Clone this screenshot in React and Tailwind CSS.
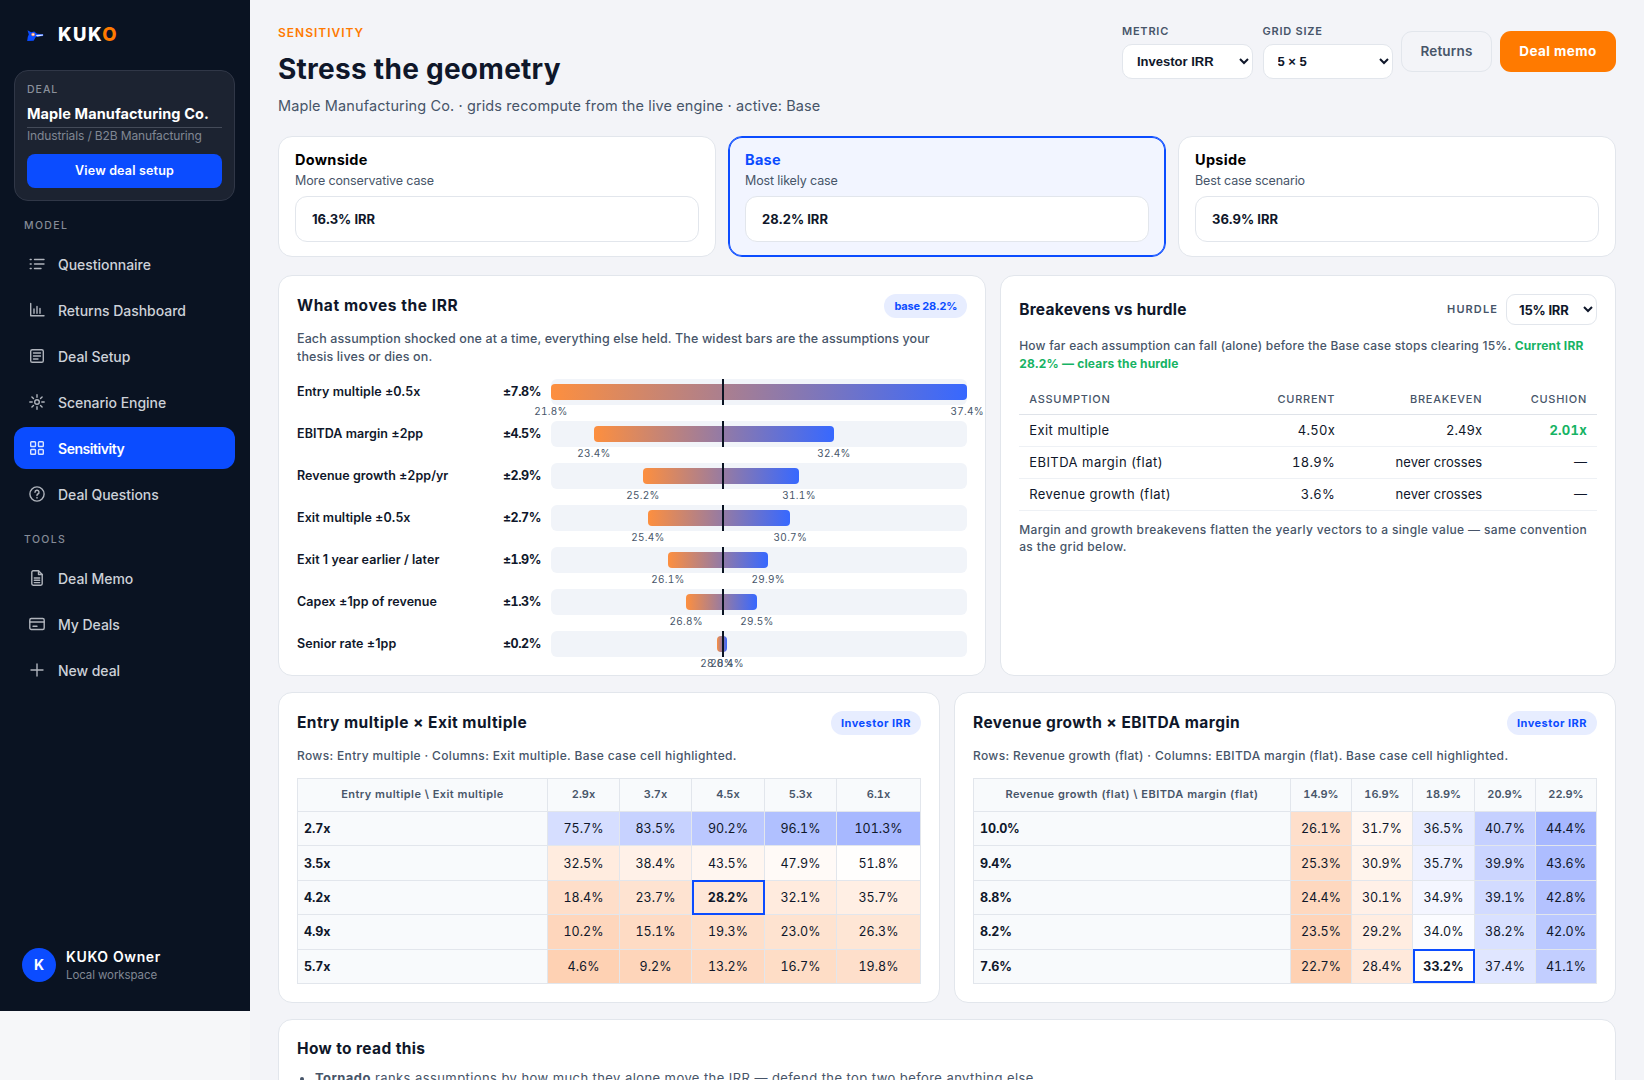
import React, { useState } from 'react';

const icons = {
  list: (
    <>
      <path d="M5.5 3.5h9.5M5.5 8h9.5M5.5 12.5H12" />
      <path d="M1.2 3.5h1M1.2 8h1M1.2 12.5h1" />
    </>
  ),
  chart: <path d="M1.7 1.5v12.3H15M5 11.3V7M8 11.3V4.5M11 11.3V6.5" />,
  form: (
    <>
      <rect x="1.7" y="1.7" width="12.6" height="12.6" rx="1.6" />
      <path d="M4.5 5h7M4.5 8h7M4.5 11h4.5" />
    </>
  ),
  sun: (
    <>
      <circle cx="8" cy="8" r="2.3" />
      <path d="M8 .8v2.4M8 12.8v2.4M.8 8h2.4M12.8 8h2.4M2.9 2.9l1.6 1.6M11.5 11.5l1.6 1.6M13.1 2.9l-1.6 1.6M4.5 11.5l-1.6 1.6" />
    </>
  ),
  grid: (
    <>
      <rect x="1.7" y="1.7" width="4.8" height="4.8" rx=".8" />
      <rect x="9.5" y="1.7" width="4.8" height="4.8" rx=".8" />
      <rect x="1.7" y="9.5" width="4.8" height="4.8" rx=".8" />
      <rect x="9.5" y="9.5" width="4.8" height="4.8" rx=".8" />
    </>
  ),
  help: (
    <>
      <circle cx="8" cy="8" r="7.1" />
      <path d="M6 6.2a2 2 0 1 1 2.9 1.8c-.6.3-.9.7-.9 1.4M8 11.5v.5" />
    </>
  ),
  file: (
    <>
      <path d="M9.5.8H4.2c-.8 0-1.4.6-1.4 1.4v11.6c0 .8.6 1.4 1.4 1.4h7.6c.8 0 1.4-.6 1.4-1.4V4.5z" />
      <path d="M9.5.8v3.7h3.7M5.3 8h5.4M5.3 10.3h5.4M5.3 12.6h5.4" />
    </>
  ),
  card: (
    <>
      <rect x=".8" y="2.5" width="14.4" height="11" rx="1.5" />
      <path d="M.8 6h14.4M4 10.2h4" />
    </>
  ),
  plus: <path d="M8 2v12M2 8h12" />,
};

const modelNav = [
  { label: 'Questionnaire', icon: 'list' },
  { label: 'Returns Dashboard', icon: 'chart' },
  { label: 'Deal Setup', icon: 'form' },
  { label: 'Scenario Engine', icon: 'sun' },
  { label: 'Sensitivity', icon: 'grid', active: true },
  { label: 'Deal Questions', icon: 'help' },
];

const toolsNav = [
  { label: 'Deal Memo', icon: 'file' },
  { label: 'My Deals', icon: 'card' },
  { label: 'New deal', icon: 'plus' },
];

const scenarios = [
  { name: 'Downside', note: 'More conservative case', irr: '16.3% IRR' },
  { name: 'Base', note: 'Most likely case', irr: '28.2% IRR' },
  { name: 'Upside', note: 'Best case scenario', irr: '36.9% IRR' },
];

// from / to are positions along the track, in percent
const tornado = [
  { label: 'Entry multiple ±0.5x', swing: '±7.8%', low: '21.8%', high: '37.4%', from: 0, to: 100 },
  { label: 'EBITDA margin ±2pp', swing: '±4.5%', low: '23.4%', high: '32.4%', from: 10.3, to: 68 },
  { label: 'Revenue growth ±2pp/yr', swing: '±2.9%', low: '25.2%', high: '31.1%', from: 22.1, to: 59.6 },
  { label: 'Exit multiple ±0.5x', swing: '±2.7%', low: '25.4%', high: '30.7%', from: 23.3, to: 57.5 },
  { label: 'Exit 1 year earlier / later', swing: '±1.9%', low: '26.1%', high: '29.9%', from: 28.1, to: 52.2 },
  { label: 'Capex ±1pp of revenue', swing: '±1.3%', low: '26.8%', high: '29.5%', from: 32.5, to: 49.5 },
  { label: 'Senior rate ±1pp', swing: '±0.2%', low: '28.0%', high: '28.4%', from: 39.9, to: 42.3 },
];
const basePos = 41.3;

const breakevens = [
  ['Exit multiple', '4.50x', '2.49x', '2.01x'],
  ['EBITDA margin (flat)', '18.9%', 'never crosses', '—'],
  ['Revenue growth (flat)', '3.6%', 'never crosses', '—'],
];

const multipleGrid = {
  corner: 'Entry multiple \\ Exit multiple',
  cols: ['2.9x', '3.7x', '4.5x', '5.3x', '6.1x'],
  widths: [250, 72, 72, 73, 72, 84],
  base: [2, 2],
  rows: [
    ['2.7x', 75.7, 83.5, 90.2, 96.1, 101.3],
    ['3.5x', 32.5, 38.4, 43.5, 47.9, 51.8],
    ['4.2x', 18.4, 23.7, 28.2, 32.1, 35.7],
    ['4.9x', 10.2, 15.1, 19.3, 23.0, 26.3],
    ['5.7x', 4.6, 9.2, 13.2, 16.7, 19.8],
  ],
};

const growthGrid = {
  corner: 'Revenue growth (flat) \\ EBITDA margin (flat)',
  cols: ['14.9%', '16.9%', '18.9%', '20.9%', '22.9%'],
  widths: [317, 61, 61, 62, 61, 61],
  base: [4, 2],
  rows: [
    ['10.0%', 26.1, 31.7, 36.5, 40.7, 44.4],
    ['9.4%', 25.3, 30.9, 35.7, 39.9, 43.6],
    ['8.8%', 24.4, 30.1, 34.9, 39.1, 42.8],
    ['8.2%', 23.5, 29.2, 34.0, 38.2, 42.0],
    ['7.6%', 22.7, 28.4, 33.2, 37.4, 41.1],
  ],
};

const LOW = [254, 209, 179];
const HIGH = [167, 184, 255];

function heat(value, min, max) {
  const mid = (min + max) / 2;
  const t = (value - mid) / (max - mid);
  const end = t < 0 ? LOW : HIGH;
  return `rgb(${end.map((c) => Math.round(255 + (c - 255) * Math.abs(t))).join(',')})`;
}

function Icon({ name }) {
  return (
    <svg className="w-4 h-4 shrink-0 opacity-85" viewBox="0 0 16 16" fill="none" stroke="currentColor" strokeWidth="1.4" strokeLinecap="round" strokeLinejoin="round">
      {icons[name]}
    </svg>
  );
}

function NavItem({ item }) {
  return (
    <a
      className={`flex items-center gap-[13px] h-[42px] px-[15px] rounded-[12px] text-[14px] ${
        item.active ? 'bg-[#0b4cff] text-white font-semibold tracking-[-0.033em]' : 'text-[#cdd1d8] font-medium tracking-[-0.003em]'
      }`}
    >
      <Icon name={item.icon} />
      {item.label}
    </a>
  );
}

function Sidebar() {
  return (
    <aside className="w-[250px] h-[1011px] shrink-0 bg-[#0a1322] pl-3.5 pr-[15px] pt-3.5 pb-[27px] flex flex-col">
      <div className="h-[41px] flex items-center pl-3">
        <svg className="w-[18px] h-[14px]" viewBox="0 0 18 14">
          <path d="M1.5 2.3l3.8 2L8.2 3.4l2.8 2.4 6.2.4v1.7l-5.6.9-1.8.2L7.6 12.7 1.2 13l.6-4.2 1-2.2z" fill="#0b4cff" />
          <path d="M9.6 7.1l7.4-.7v1.1l-5.6.9z" fill="#e6ecff" />
          <circle cx="7.1" cy="6.5" r="1.8" fill="#ff9a6a" />
          <circle cx="7.1" cy="6.5" r=".8" fill="#fff" />
        </svg>
        <span className="ml-[14px] text-[18.5px] font-extrabold tracking-[0.078em] text-white">
          KUK<span className="text-[#ff7a00]">O</span>
        </span>
      </div>

      <div className="mt-[15px] h-[131px] rounded-[14px] border border-[#303747] bg-[#1c2331] p-3">
        <div className="text-[10.5px] leading-[14px] font-medium tracking-[0.095em] text-[#8a909b]">DEAL</div>
        <div className="mt-1.5 pb-[1.5px] border-b border-[#444b59] text-[14.5px] leading-[22px] font-bold tracking-[0.006em] text-white whitespace-nowrap">Maple Manufacturing Co.</div>
        <div className="text-[12px] leading-[15px] tracking-[-0.011em] text-[#808793] whitespace-nowrap">Industrials / B2B Manufacturing</div>
        <button className="mt-[11.5px] w-full h-[34px] rounded-[8px] bg-[#0b4cff] text-[12.5px] font-semibold tracking-[0.014em] text-white">View deal setup</button>
      </div>

      <div className="mt-[18px] pl-2.5 text-[10.5px] leading-[14px] font-medium tracking-[0.13em] text-[#858b97]">MODEL</div>
      <nav className="mt-[10px] flex flex-col gap-1">
        {modelNav.map((item) => <NavItem key={item.label} item={item} />)}
      </nav>
      <div className="mt-[18px] pl-2.5 text-[10.5px] leading-[14px] font-medium tracking-[0.13em] text-[#858b97]">TOOLS</div>
      <nav className="mt-[10px] flex flex-col gap-1">
        {toolsNav.map((item) => <NavItem key={item.label} item={item} />)}
      </nav>

      <div className="mt-auto pl-2 flex items-center gap-2.5">
        <div className="w-[34px] h-[34px] rounded-full bg-[#0b4cff] text-white text-[14px] font-bold flex items-center justify-center">K</div>
        <div className="pt-[3px]">
          <div className="text-[14px] leading-[18px] font-semibold tracking-[0.045em] text-white">KUKO Owner</div>
          <div className="text-[11.5px] leading-[18px] tracking-[-0.008em] text-[#808793]">Local workspace</div>
        </div>
      </div>
    </aside>
  );
}

function Field({ label, children }) {
  return (
    <label className="flex flex-col">
      <span className="text-[11px] leading-[14px] font-semibold tracking-[0.07em] text-[#475569] mb-1.5">{label}</span>
      <select className="w-[130.5px] h-[35px] pl-[10px] pr-1 rounded-[10px] border border-[#e2e6ec] bg-white font-['Liberation_Sans',sans-serif] text-[13px] font-bold text-[#0f172a]">
        {children}
      </select>
    </label>
  );
}

function Header() {
  return (
    <header className="flex justify-between items-start h-[112px]">
      <div>
        <div className="text-[12px] leading-[17px] font-semibold tracking-[0.082em] text-[#ff7a00]">SENSITIVITY</div>
        <h1 className="mt-[10px] text-[28px] leading-[36px] font-bold tracking-[0.0095em] text-[#0f172a]">Stress the geometry</h1>
        <p className="mt-2 text-[14.5px] leading-[22px] tracking-[0.0078em] text-[#475569]">Maple Manufacturing Co. · grids recompute from the live engine · active: Base</p>
      </div>
      <div className="flex items-start">
        <div className="flex gap-2.5">
          <Field label="METRIC"><option>Investor IRR</option></Field>
          <Field label="GRID SIZE"><option>5 × 5</option></Field>
        </div>
        <button className="mt-[7px] ml-2 w-[91px] h-[41px] rounded-[11px] border border-[#e2e6ec] text-[13.5px] font-semibold tracking-[0.015em] text-[#475569]">Returns</button>
        <button className="mt-[7px] ml-2 w-[116px] h-[41px] rounded-[11px] bg-[#ff7a00] text-[13.5px] font-bold tracking-[0.031em] text-white">Deal memo</button>
      </div>
    </header>
  );
}

function ScenarioCard({ scenario, active, onClick }) {
  return (
    <button
      onClick={onClick}
      className={`h-[121px] rounded-[14px] px-4 pt-[14px] border text-left flex flex-col ${
        active ? 'border-[#0b4cff] bg-[#f2f5ff] ring-1 ring-inset ring-[#0b4cff]' : 'border-[#e2e6ec] bg-white'
      }`}
    >
      <span className={`text-[14.5px] leading-[18px] font-bold tracking-[0.02em] ${active ? 'text-[#0b4cff]' : 'text-black'}`}>{scenario.name}</span>
      <span className="mt-[3px] text-[12.5px] leading-[18px] tracking-[-0.01em] text-[#475569]">{scenario.note}</span>
      <span className="mt-[6px] w-full h-[46px] shrink-0 px-4 pt-0.5 flex items-center rounded-[12px] border border-[#e2e6ec] bg-white text-[13px] font-bold text-[#0f172a]">{scenario.irr}</span>
    </button>
  );
}

function Badge({ children }) {
  return <span className="h-6 px-2.5 flex items-center rounded-full bg-[#e7edff] text-[11px] font-bold text-[#0b4cff]">{children}</span>;
}

function Tornado() {
  return (
    <section className="h-[401px] bg-white border border-[#e2e6ec] rounded-[14px] p-[18px]">
      <div className="flex items-center justify-between">
        <h2 className="text-[15.5px] leading-[24px] font-bold tracking-[0.0365em] text-[#0f172a]">What moves the IRR</h2>
        <Badge><span className="tracking-[-0.015em]">base 28.2%</span></Badge>
      </div>
      <p className="mt-3 text-[12.5px] leading-[18px] font-medium tracking-[0.009em] text-[#475569]">
        Each assumption shocked one at a time, everything else held. The widest bars are the assumptions your thesis lives or dies on.
      </p>
      <div className="mt-[13px] flex flex-col gap-4">
        {tornado.map((row) => (
          <div key={row.label} className="grid grid-cols-[190px_64px_1fr] items-center h-[26px]">
            <span className="text-[12.5px] font-semibold tracking-[0.005em] text-[#0f172a]">{row.label}</span>
            <span className="pr-2.5 text-right text-[12.5px] font-bold tracking-[-0.035em] tabular-nums text-[#0f172a]">{row.swing}</span>
            <div className="relative h-[26px] rounded-[6px] bg-[#f1f4f9]">
              <div
                className="absolute top-[5px] h-4 rounded-[4px] bg-linear-to-r/srgb from-[#fd8f3f] to-[#3768ff]"
                style={{ left: `${row.from}%`, width: `${row.to - row.from}%` }}
              />
              <div className="absolute top-0 h-full w-0.5 -translate-x-1/2 bg-[#0a1322]" style={{ left: `${basePos}%` }} />
              <span className="absolute top-[26px] -translate-x-1/2 text-[10px] leading-[13px] tracking-[0.03em] tabular-nums text-[#475569]" style={{ left: `${row.from}%` }}>{row.low}</span>
              <span className="absolute top-[26px] -translate-x-1/2 text-[10px] leading-[13px] tracking-[0.03em] tabular-nums text-[#475569]" style={{ left: `${row.to}%` }}>{row.high}</span>
            </div>
          </div>
        ))}
      </div>
    </section>
  );
}

function Breakevens() {
  return (
    <section className="h-[401px] bg-white border border-[#e2e6ec] rounded-[14px] p-[18px]">
      <div className="flex items-center justify-between">
        <h2 className="text-[15.5px] leading-[24px] font-bold tracking-[0.016em] text-[#0f172a]">Breakevens vs hurdle</h2>
        <label className="flex items-center gap-2 text-[11px] font-semibold tracking-[0.1em] text-[#475569]">
          HURDLE
          <select className="w-[91px] h-[31px] pl-2 pr-0.5 rounded-[9px] border border-[#e2e6ec] bg-white text-[13px] font-bold tracking-[-0.015em] text-[#0f172a]">
            <option>15% IRR</option>
          </select>
        </label>
      </div>
      <p className="mt-3 text-[12px] leading-[18px] font-medium tracking-[0.019em] text-[#475569]">
        How far each assumption can fall (alone) before the Base case stops clearing 15%.{' '}
        <span className="font-bold tracking-[0.015em] text-[#16b364]">Current IRR 28.2% — clears the hurdle</span>
      </p>
      <table className="mt-[10px] w-full table-fixed border-collapse text-[13px] text-[#0f172a]">
        <colgroup>
          <col className="w-[192px]" />
          <col className="w-[134px]" />
          <col className="w-[147px]" />
          <col />
        </colgroup>
        <thead>
          <tr className="h-[31px] border-b border-[#dfe3e9] text-[11px] tracking-[0.065em] text-[#475569]">
            <th className="px-2.5 pt-0.5 text-left font-medium">ASSUMPTION</th>
            <th className="px-2.5 pt-0.5 text-right font-medium">CURRENT</th>
            <th className="px-2.5 pt-0.5 text-right font-medium">BREAKEVEN</th>
            <th className="px-2.5 pt-0.5 text-right font-medium">CUSHION</th>
          </tr>
        </thead>
        <tbody>
          {breakevens.map(([name, current, breakeven, cushion]) => (
            <tr key={name} className="h-[32px] border-b border-[#eef1f5]">
              <td className="px-2.5 pt-0.5 tracking-[0.035em]">{name}</td>
              <td className="px-2.5 pt-0.5 text-right tracking-[0.025em] tabular-nums">{current}</td>
              <td className="px-2.5 pt-0.5 text-right tracking-[0.003em] tabular-nums">{breakeven}</td>
              <td className={`px-2.5 pt-0.5 text-right tabular-nums ${cushion === '—' ? '' : 'font-bold tracking-[0.02em] text-[#16b364]'}`}>{cushion}</td>
            </tr>
          ))}
        </tbody>
      </table>
      <p className="mt-[10px] text-[12px] leading-[17px] font-medium tracking-[0.0295em] text-[#475569]">
        Margin and growth breakevens flatten the yearly vectors to a single value — same convention as the grid below.
      </p>
    </section>
  );
}

function HeatGrid({ title, note, grid }) {
  const values = grid.rows.flatMap((row) => row.slice(1));
  const min = Math.min(...values);
  const max = Math.max(...values);
  return (
    <section className="h-[311px] bg-white border border-[#e2e6ec] rounded-[14px] p-[18px]">
      <div className="flex items-center justify-between">
        <h2 className="text-[15.5px] leading-[24px] font-bold tracking-[0.029em] text-[#0f172a]">{title}</h2>
        <Badge><span className="tracking-[0.045em]">Investor IRR</span></Badge>
      </div>
      <p className="mt-3 text-[12px] leading-[18px] font-medium tracking-[0.029em] text-[#475569]">{note}</p>
      <table className="mt-[13px] w-full table-fixed border-collapse text-[12.5px] tabular-nums text-[#0f172a]">
        <colgroup>
          {grid.widths.map((w, i) => <col key={i} style={{ width: w }} />)}
        </colgroup>
        <thead>
          <tr className="h-[33px] bg-[#f8fafc] text-[11px] text-[#475569]">
            <th className="border border-[#e2e6ec] pb-0.5 font-semibold tracking-[0.04em]">{grid.corner}</th>
            {grid.cols.map((c) => <th key={c} className="border border-[#e2e6ec] pb-0.5 font-semibold">{c}</th>)}
          </tr>
        </thead>
        <tbody>
          {grid.rows.map(([head, ...cells], r) => (
            <tr key={head} className="h-[34.4px]">
              <th className="border border-[#e2e6ec] bg-[#f8fafc] pl-[6px] pt-0.5 text-left font-bold tracking-[-0.01em]">{head}</th>
              {cells.map((v, c) => {
                const isBase = r === grid.base[0] && c === grid.base[1];
                return (
                  <td
                    key={c}
                    className={`border border-[#e2e6ec] pt-0.5 text-center ${isBase ? 'font-bold outline-2 -outline-offset-2 outline-[#0b4cff]' : ''}`}
                    style={{ backgroundColor: heat(v, min, max) }}
                  >
                    {v.toFixed(1)}%
                  </td>
                );
              })}
            </tr>
          ))}
        </tbody>
      </table>
    </section>
  );
}

export default function App() {
  const [active, setActive] = useState('Base');

  return (
    <div className="h-screen overflow-hidden flex items-start bg-[#f6f7f9] font-['Inter',sans-serif]">
      <Sidebar />
      <main className="flex-1 h-[1300px] bg-[#f3f4f8] px-7 pt-6">
        <Header />
        <div className="grid grid-cols-3 gap-3">
          {scenarios.map((s) => (
            <ScenarioCard key={s.name} scenario={s} active={s.name === active} onClick={() => setActive(s.name)} />
          ))}
        </div>
        <div className="mt-[18px] grid grid-cols-[1.15fr_1fr] gap-3.5">
          <Tornado />
          <Breakevens />
        </div>
        <div className="mt-4 grid grid-cols-2 gap-3.5">
          <HeatGrid title="Entry multiple × Exit multiple" note="Rows: Entry multiple · Columns: Exit multiple. Base case cell highlighted." grid={multipleGrid} />
          <HeatGrid title="Revenue growth × EBITDA margin" note="Rows: Revenue growth (flat) · Columns: EBITDA margin (flat). Base case cell highlighted." grid={growthGrid} />
        </div>
        <section className="mt-4 h-[180px] bg-white border border-[#e2e6ec] rounded-[14px] px-[18px] pt-[17px]">
          <h2 className="text-[15.5px] leading-[24px] font-bold tracking-[0.024em] text-[#0f172a]">How to read this</h2>
          <ul className="mt-1.5 pl-[18px] list-disc text-[13px] leading-[22px] tracking-[0.0325em] text-[#475569]">
            <li><b className="font-bold">Tornado</b> ranks assumptions by how much they alone move the IRR — defend the top two before anything else.</li>
          </ul>
        </section>
      </main>
    </div>
  );
}
